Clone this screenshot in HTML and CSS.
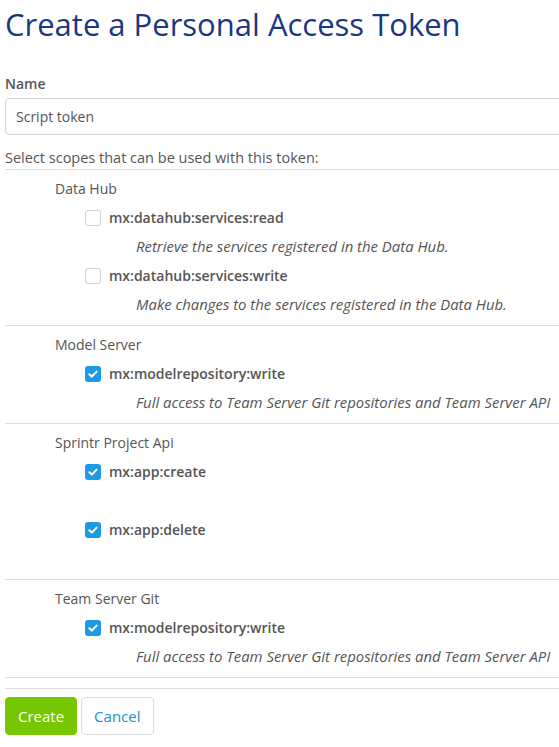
FILE: index.html
```html
<!DOCTYPE html>
<html>
<head>
<meta charset="utf-8">
<link rel="stylesheet" href="styles.css">
</head>
<body>
<div class="page">
  <h1 class="title">Create a Personal Access Token</h1>
  <label class="field-label">Name</label>
  <div class="input">Script token</div>
  <p class="hint">Select scopes that can be used with this token:</p>
  <div class="groups">
    <div class="group">
      <div class="group-label">Data Hub</div>
      <div class="scope">
        <div class="scope-row"><span class="cb"></span><span class="scope-name">mx:datahub:services:read</span></div>
        <div class="scope-desc">Retrieve the services registered in the Data Hub.</div>
      </div>
      <div class="scope">
        <div class="scope-row"><span class="cb"></span><span class="scope-name">mx:datahub:services:write</span></div>
        <div class="scope-desc">Make changes to the services registered in the Data Hub.</div>
      </div>
    </div>
    <div class="group">
      <div class="group-label">Model Server</div>
      <div class="scope">
        <div class="scope-row"><span class="cb checked"><svg viewBox="0 0 16 16" width="16" height="16"><path d="M4.3 8.3 L6.8 10.6 L11.6 5.6" fill="none" stroke="#fff" stroke-width="2" stroke-linecap="round" stroke-linejoin="round"/></svg></span><span class="scope-name">mx:modelrepository:write</span></div>
        <div class="scope-desc">Full access to Team Server Git repositories and Team Server API</div>
      </div>
    </div>
    <div class="group">
      <div class="group-label">Sprintr Project Api</div>
      <div class="scope">
        <div class="scope-row"><span class="cb checked"><svg viewBox="0 0 16 16" width="16" height="16"><path d="M4.3 8.3 L6.8 10.6 L11.6 5.6" fill="none" stroke="#fff" stroke-width="2" stroke-linecap="round" stroke-linejoin="round"/></svg></span><span class="scope-name">mx:app:create</span></div>
        <div class="scope-desc"></div>
      </div>
      <div class="scope">
        <div class="scope-row"><span class="cb checked"><svg viewBox="0 0 16 16" width="16" height="16"><path d="M4.3 8.3 L6.8 10.6 L11.6 5.6" fill="none" stroke="#fff" stroke-width="2" stroke-linecap="round" stroke-linejoin="round"/></svg></span><span class="scope-name">mx:app:delete</span></div>
        <div class="scope-desc"></div>
      </div>
    </div>
    <div class="group">
      <div class="group-label">Team Server Git</div>
      <div class="scope">
        <div class="scope-row"><span class="cb checked"><svg viewBox="0 0 16 16" width="16" height="16"><path d="M4.3 8.3 L6.8 10.6 L11.6 5.6" fill="none" stroke="#fff" stroke-width="2" stroke-linecap="round" stroke-linejoin="round"/></svg></span><span class="scope-name">mx:modelrepository:write</span></div>
        <div class="scope-desc">Full access to Team Server Git repositories and Team Server API</div>
      </div>
    </div>
  </div>
  <div class="footer">
    <button class="btn btn-primary">Create</button>
    <button class="btn btn-default">Cancel</button>
  </div>
</div>
</body>
</html>
```
FILE: styles.css
```css
html, body {
  margin: 0;
  padding: 0;
  overflow: hidden;
  background: #fff;
}
body {
  font-family: "Open Sans", "DejaVu Sans", sans-serif;
  font-size: 14px;
  color: #555;
}
.page {
  margin-left: 5px;
  width: 566px;
}
.title {
  margin: 0;
  padding-top: 2px;
  font-size: 31px;
  font-weight: 400;
  line-height: 44px;
  color: #1b3781;
}
.field-label {
  display: block;
  margin-top: 28px;
  font-weight: 600;
  line-height: 20px;
}
.input {
  margin-top: 4px;
  box-sizing: border-box;
  height: 37px;
  border: 1px solid #d4d4d4;
  border-radius: 4px;
  padding: 0 10px;
  line-height: 35px;
  color: #555;
}
.hint {
  margin: 13px 0 0;
  font-size: 14.5px;
  line-height: 20px;
  padding-bottom: 1px;
  border-bottom: 1px solid #ddd;
}
.group {
  padding: 9px 0 11px 50px;
  border-bottom: 1px solid #ddd;
}
.group-label {
  line-height: 20px;
}
.scope {
  padding-left: 30px;
}
.scope-row {
  display: flex;
  align-items: center;
  gap: 8px;
  margin-top: 9px;
  height: 20px;
}
.scope + .scope .scope-row {
  margin-top: 10px;
}
.scope-name {
  font-weight: 600;
  line-height: 20px;
}
.cb {
  width: 16px;
  height: 16px;
  box-sizing: border-box;
  border: 1px solid #cfcfcf;
  border-radius: 3px;
  background: #fff;
  display: flex;
}
.cb.checked {
  border: none;
  background: #1a9be3;
}
.scope-desc {
  margin-top: 8px;
  padding-left: 51px;
  height: 20px;
  font-size: 14.9px;
  line-height: 20px;
  font-style: italic;
  white-space: nowrap;
}
.footer {
  margin-top: 10px;
  border-top: 1px solid #ddd;
  padding-top: 8px;
  display: flex;
  gap: 4px;
}
.btn {
  font-family: "Open Sans", "DejaVu Sans", sans-serif;
  font-size: 15px;
  height: 38px;
  border-radius: 4px;
  padding: 0 12px;
  cursor: pointer;
}
.btn-primary {
  background: #76c700;
  border: 1px solid #76c700;
  color: #fff;
}
.btn-default {
  background: #fff;
  border: 1px solid #dcdcdc;
  color: #1b8fd8;
}
```
